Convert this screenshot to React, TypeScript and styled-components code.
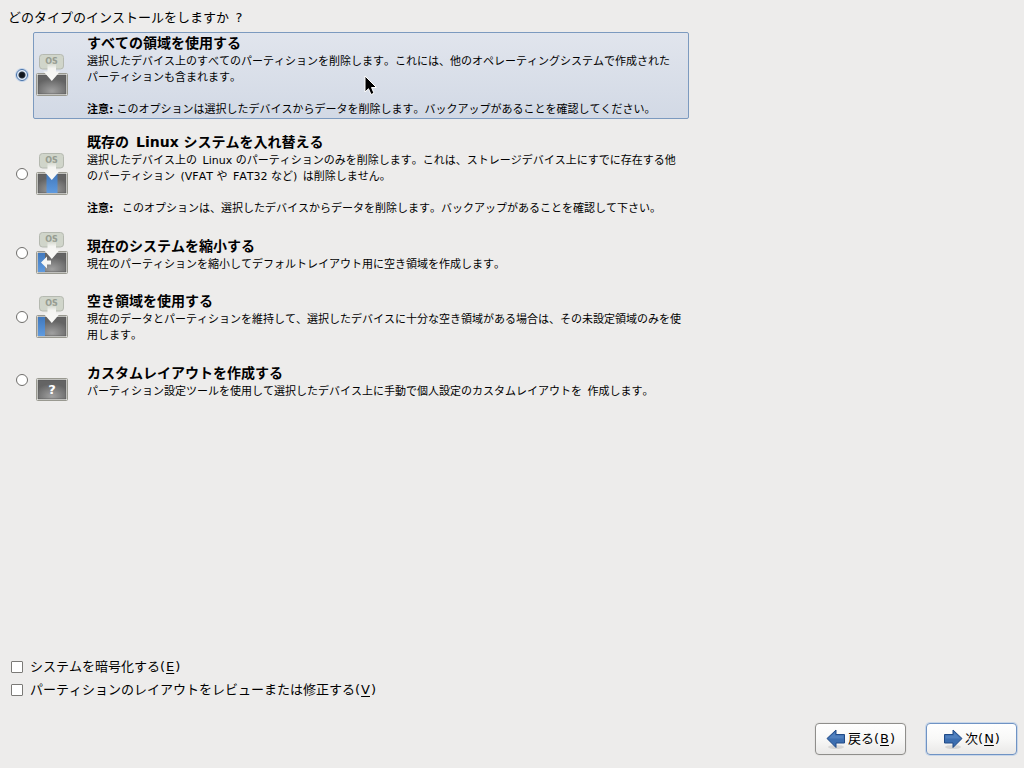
import React, { useState } from 'react';
import styled, { createGlobalStyle, css } from 'styled-components';

const GlobalStyle = createGlobalStyle`
  * { box-sizing: border-box; }
  body {
    margin: 0;
    background: #edeceb;
    color: #000;
    font: 13px/20px "DejaVu Sans", "Noto Sans CJK JP", sans-serif;
    font-kerning: none;
  }
`;

const Page = styled.main`
  min-height: 100vh;
  display: flex;
  flex-direction: column;
  padding: 8px 7px 13px 8px;
`;

const Question = styled.h1`
  margin: 0;
  font-size: 13px;
  font-weight: 400;
  line-height: 20px;
`;

const Options = styled.div`
  display: flex;
  flex-direction: column;
  gap: 12px;
  max-width: 681px;
  margin-top: 4px;
`;

const Option = styled.label`
  display: flex;
  align-items: center;
  gap: 5px;
  padding-left: 8px;
`;

const Radio = styled.input`
  appearance: none;
  flex: none;
  width: 12px;
  height: 12px;
  margin: 0 0 2px;
  border: 1px solid #6f6e6b;
  border-radius: 50%;
  background: #fff;
  &:checked {
    border-color: #4470a8;
    background: radial-gradient(circle, #10151c 0 2px, #2a3542 3px, #e2ecf8 4px);
    box-shadow: 0 0 0 1px #c3d3e8;
  }
`;

const Card = styled.div<{ $selected: boolean }>`
  position: relative;
  flex: 1;
  display: flex;
  align-items: center;
  gap: 19px;
  min-height: 48px;
  padding: 0 2px;
  border: 1px solid transparent;
  border-radius: 2px;
  ${(p) =>
    p.$selected &&
    css`
      border-color: #7c9abf;
      background: linear-gradient(#e1e5ed, #d2d9e5);
    `}
`;

const Art = styled.svg`
  flex: none;
  display: block;
  width: 32px;
  height: 48px;
  margin: -3px 0 -1px;
`;

const Heading = styled.span`
  display: block;
  margin-bottom: 1px;
  font-size: 14px;
  font-weight: 700;
  line-height: 20px;
`;

const Description = styled.span`
  display: block;
  font-size: 11px;
  line-height: 16px;
`;

const Note = styled.strong`
  margin-right: 3px;
`;

const Pointer = styled.svg`
  position: absolute;
  left: 330px;
  top: 42px;
  width: 14px;
  height: 22px;
`;

const Footer = styled.footer`
  display: flex;
  flex-direction: column;
  gap: 3px;
  margin-top: auto;
`;

const CheckLabel = styled.label`
  display: flex;
  align-items: center;
  align-self: flex-start;
  gap: 7px;
  padding-left: 3px;
`;

const Checkbox = styled.input`
  appearance: none;
  flex: none;
  width: 12px;
  height: 12px;
  margin: 0;
  border: 1px solid #7b7a77;
  border-radius: 1px;
  background: #fff;
  &:checked {
    background: #4470a8;
  }
`;

const Key = styled.u`
  margin: 0 1px;
  text-underline-offset: 2px;
`;

const Actions = styled.div`
  display: flex;
  justify-content: flex-end;
  gap: 20px;
  margin-top: 20px;
`;

const ActionButton = styled.button<{ $primary?: boolean }>`
  display: flex;
  align-items: center;
  justify-content: center;
  gap: 2px;
  width: 91px;
  height: 32px;
  padding: 0;
  border: 1px solid ${(p) => (p.$primary ? '#6f93c4' : '#8f8e8b')};
  border-radius: 4px;
  background: linear-gradient(#fff, #f8f8f7 50%, #e9e8e7);
  box-shadow: 0 0 0 1px ${(p) => (p.$primary ? '#c8d6e8' : '#e6e5e4')};
  color: #000;
  font: inherit;
`;

type Kind = 'all' | 'replace' | 'shrink' | 'free' | 'custom';

const DownArrow = () => (
  <path d="M11.500 12h8.500v8.500h4l-8.200 9.500-8.300-9.500h4z" fill="url(#arrowFill)" />
);

const DiskArt = ({ kind }: { kind: Kind }) => (
  <Art viewBox="0 0 32 48" aria-hidden="true">
    <defs>
      <radialGradient id="diskFill" cx="50%" cy="85%" r="65%">
        <stop offset="0" stopColor="#a0a0a0" />
        <stop offset="1" stopColor="#646464" />
      </radialGradient>
      <linearGradient id="blueFill" x1="0" y1="0" x2="0" y2="1">
        <stop offset="0" stopColor="#4179bd" />
        <stop offset="1" stopColor="#5f9ade" />
      </linearGradient>
      <linearGradient id="arrowFill" x1="0" y1="0" x2="0" y2="1">
        <stop offset="0" stopColor="#f4f4f1" stopOpacity="0" />
        <stop offset="0.3" stopColor="#f4f4f1" />
        <stop offset="1" stopColor="#fafaf8" />
      </linearGradient>
    </defs>
    {kind !== 'custom' && (
      <>
        <rect x="3.500" y="3.500" width="24" height="14.500" rx="3" fill="#d0d5ca" stroke="#b5b9b0" />
        <text x="15.500" y="13" textAnchor="middle" fontSize="8" fontWeight="700" fill="#969c91">
          OS
        </text>
      </>
    )}
    <rect x="0.500" y="22.500" width="31" height="22" rx="1" fill="#eeeeea" stroke="#999990" />
    <rect x="2" y="24" width="28" height="19" fill="url(#diskFill)" stroke="#555" strokeWidth="0.600" />
    {kind === 'replace' && <rect x="10.500" y="24" width="11" height="19" fill="url(#blueFill)" />}
    {(kind === 'shrink' || kind === 'free') && (
      <rect x="2" y="24" width="7" height="19" fill="url(#blueFill)" />
    )}
    {kind !== 'custom' && <DownArrow />}
    {kind === 'shrink' && <path d="M5 33.500l6-6v4h4v4h-4v4z" fill="#f7f7f4" />}
    {kind === 'custom' && (
      <text x="16" y="38" textAnchor="middle" fontSize="13" fontWeight="700" fill="#fff">
        ?
      </text>
    )}
  </Art>
);

const ArrowIcon = ({ back }: { back?: boolean }) => (
  <svg width="20" height="22" viewBox="0 0 20 22" aria-hidden="true">
    <ellipse cx="10" cy="19" rx="8" ry="2" fill="#000" opacity="0.1" />
    <g transform={back ? undefined : 'matrix(-1 0 0 1 20 0)'}>
      <path d="M1 10.500L10 2v4.500h8.500v8.500H10v4.500z" fill="#3c6eb0" stroke="#204a87" strokeLinejoin="round" />
      <path d="M2.500 10.500L9 4.400V7.500h8.500v3z" fill="#5d8cc8" opacity="0.600" />
    </g>
  </svg>
);

const options: { kind: Kind; title: string; body: React.ReactNode }[] = [
  {
    kind: 'all',
    title: 'すべての領域を使用する',
    body: (
      <>
        選択したデバイス上のすべてのパーティションを削除します。これには、他のオペレーティングシステムで作成された
        <br />
        パーティションも含まれます。
        <br />
        <br />
        <Note>注意:</Note>このオプションは選択したデバイスからデータを削除します。バックアップがあることを確認してください。
      </>
    ),
  },
  {
    kind: 'replace',
    title: '既存の\u2002Linux システムを入れ替える',
    body: (
      <>
        選択したデバイス上の&ensp;Linux のパーティションのみを削除します。これは、ストレージデバイス上にすでに存在する他
        <br />
        のパーティション&ensp;(VFAT や&ensp;FAT32 など)&ensp;は削除しません。
        <br />
        <br />
        <Note>注意:</Note>&ensp;このオプションは、選択したデバイスからデータを削除します。バックアップがあることを確認して下さい。
      </>
    ),
  },
  {
    kind: 'shrink',
    title: '現在のシステムを縮小する',
    body: '現在のパーティションを縮小してデフォルトレイアウト用に空き領域を作成します。',
  },
  {
    kind: 'free',
    title: '空き領域を使用する',
    body: (
      <>
        現在のデータとパーティションを維持して、選択したデバイスに十分な空き領域がある場合は、その未設定領域のみを使
        <br />
        用します。
      </>
    ),
  },
  {
    kind: 'custom',
    title: 'カスタムレイアウトを作成する',
    body: 'パーティション設定ツールを使用して選択したデバイス上に手動で個人設定のカスタムレイアウトを\u2002作成します。',
  },
];

export default function App() {
  const [selected, setSelected] = useState<Kind>('all');

  return (
    <>
      <GlobalStyle />
      <Page lang="ja">
        <Question id="question">どのタイプのインストールをしますか&ensp;?</Question>
        <Options role="radiogroup" aria-labelledby="question">
          {options.map(({ kind, title, body }) => (
            <Option key={kind}>
              <Radio
                type="radio"
                name="install-type"
                checked={selected === kind}
                onChange={() => setSelected(kind)}
              />
              <Card $selected={selected === kind}>
                <DiskArt kind={kind} />
                <span>
                  <Heading>{title}</Heading>
                  <Description>{body}</Description>
                </span>
                {kind === 'all' && (
                  <Pointer viewBox="0 0 14 22" aria-hidden="true">
                    <path
                      d="M1 1v16l3.500-3.300L7 19.500l3-1.300-2.500-5.700H12.500z"
                      fill="#000"
                      stroke="#fff"
                    />
                  </Pointer>
                )}
              </Card>
            </Option>
          ))}
        </Options>
        <Footer>
          <CheckLabel>
            <Checkbox type="checkbox" />
            <span>
              システムを暗号化する(<Key>E</Key>)
            </span>
          </CheckLabel>
          <CheckLabel>
            <Checkbox type="checkbox" />
            <span>
              パーティションのレイアウトをレビューまたは修正する(<Key>V</Key>)
            </span>
          </CheckLabel>
          <Actions>
            <ActionButton type="button">
              <ArrowIcon back />
              <span>
                戻る(<Key>B</Key>)
              </span>
            </ActionButton>
            <ActionButton type="button" $primary>
              <ArrowIcon />
              <span>
                次(<Key>N</Key>)
              </span>
            </ActionButton>
          </Actions>
        </Footer>
      </Page>
    </>
  );
}
